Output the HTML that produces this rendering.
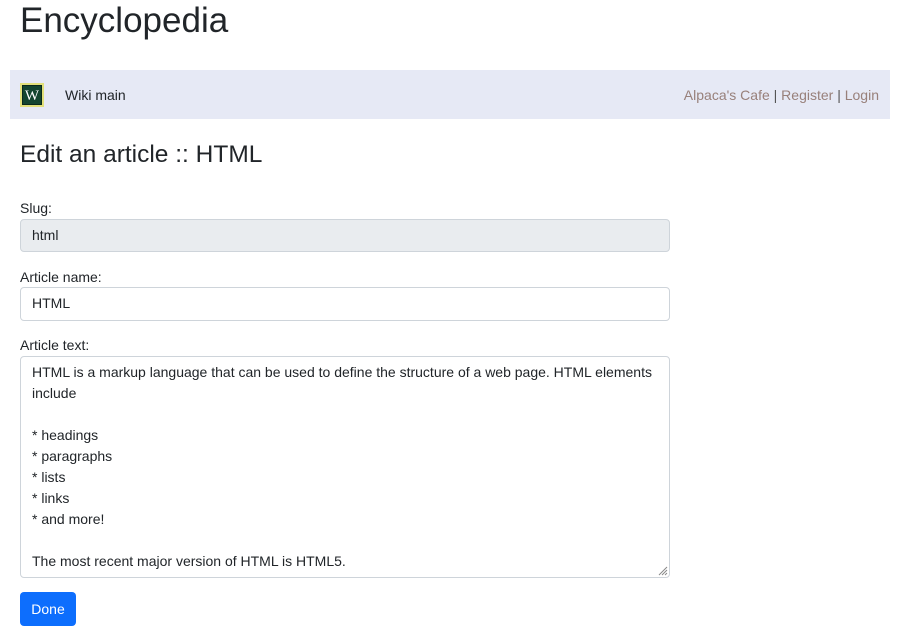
<!DOCTYPE html>
<html><head><meta charset="utf-8"><style>
*{box-sizing:border-box}
body{margin:0;font-family:"Liberation Sans",sans-serif;font-size:14px;color:#212529;background:#fff;width:902px;height:634px;overflow:hidden;position:relative}
h1{position:absolute;left:20px;top:0;margin:0;font-size:35px;font-weight:400;line-height:42px}
.nav{position:absolute;left:10px;top:70px;width:880px;height:49px;background:#e6e9f5}
.logo{position:absolute;left:10px;top:13px;width:24px;height:24px;background:#e2e07a;padding:2px}
.logo div{width:20px;height:20px;background:#14452f;color:#fff;font-family:"Liberation Serif",serif;font-size:15px;text-align:center;line-height:20px;border:1px solid #0a2a1c}
.wm{position:absolute;left:55px;top:17px}
.right{position:absolute;right:11px;top:17px;color:#555}
.right a{color:#98807a;text-decoration:none}
h2{position:absolute;left:20px;top:140px;margin:0;font-size:24.5px;font-weight:400;line-height:29px}
.lbl{position:absolute;left:20px}
.inp{position:absolute;left:20px;width:650px;border:1px solid #ced4da;border-radius:4px;padding:0 11px;line-height:31px;background:#fff}
.ta{position:absolute;left:20px;top:356px;width:650px;height:222px;border:1px solid #ced4da;border-radius:4px;padding:5px 11px;line-height:21px;white-space:pre-wrap}
.btn{position:absolute;left:20px;top:592px;width:56px;height:34px;background:#0d6efd;color:#fff;border-radius:4px;text-align:center;line-height:34px}
</style></head><body>
<h1>Encyclopedia</h1>
<div class="nav"><div class="logo"><div>W</div></div><span class="wm">Wiki main</span>
<span class="right"><a>Alpaca's Cafe</a> | <a>Register</a> | <a>Login</a></span></div>
<h2>Edit an article :: HTML</h2>
<div class="lbl" style="top:200px">Slug:</div>
<div class="inp" style="top:219px;height:33px;background:#e9ecef">html</div>
<div class="lbl" style="top:269px">Article name:</div>
<div class="inp" style="top:287px;height:34px">HTML</div>
<div class="lbl" style="top:337px">Article text:</div>
<div class="ta">HTML is a markup language that can be used to define the structure of a web page. HTML elements include

* headings
* paragraphs
* lists
* links
* and more!

The most recent major version of HTML is HTML5.</div>
<svg style="position:absolute;left:657px;top:565px" width="11" height="11"><path d="M10 2L2 10M10 5L5 10M10 8L8 10" stroke="#888" stroke-width="1"/></svg>
<div class="btn">Done</div>
</body></html>
